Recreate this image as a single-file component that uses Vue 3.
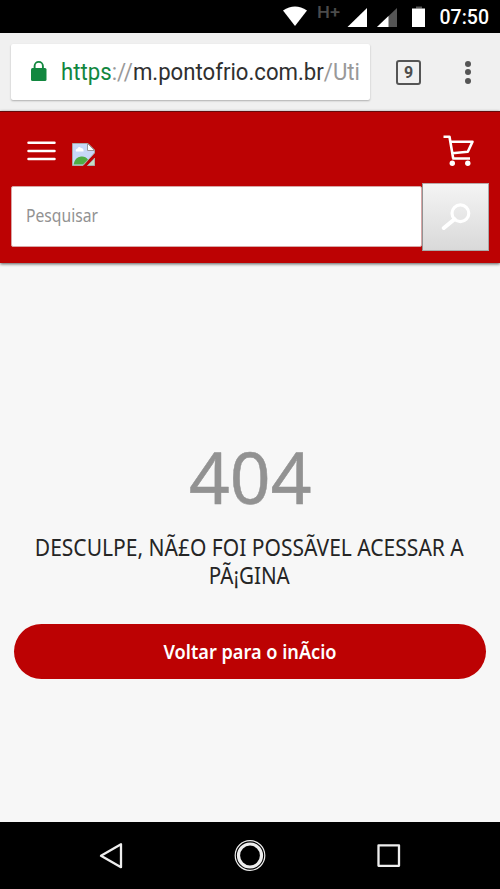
<script setup>
const titleLines = [
  { text: 'DESCULPE, NÃ£O FOI POSSÃVEL ACESSAR A', width: 428, y: 32 },
  { text: 'PÃ¡GINA', width: 80, y: 60 },
]
</script>

<template>
  <div class="screen">
    <div class="status">
      <svg width="230" height="33" viewBox="270 0 230 33">
        <path d="M283 10.500Q295 2.500 307 10.500L295 26Z" fill="#fff" />
        <text class="roboto" x="317" y="18" font-size="16" font-weight="500" fill="#4b4b4b" textLength="23" lengthAdjust="spacingAndGlyphs">H+</text>
        <path d="M347.500 27L367 8V27Z" fill="#fff" />
        <path d="M377 27L397 8V27Z" fill="#555" />
        <path d="M377 27L388.500 16V27Z" fill="#fff" />
        <path d="M416 6.500h6v2h-6z" fill="#555" />
        <path d="M412 8.500h13V27h-13z" fill="#fff" />
        <text class="roboto" x="439.500" y="24" font-size="20" font-weight="500" fill="#fff" textLength="49.500" lengthAdjust="spacingAndGlyphs">07:50</text>
      </svg>
    </div>

    <div class="browser">
      <div class="address">
        <svg width="359" height="56" viewBox="11 44 359 56">
          <rect x="31" y="68" width="15.500" height="13" rx="1.500" fill="#12873f" />
          <path d="M34.600 69V66a4.150 4.150 0 0 1 8.300 0V69" fill="none" stroke="#12873f" stroke-width="1.900" />
          <text class="roboto" x="61" y="80" font-size="23" fill="#303030" textLength="299" lengthAdjust="spacingAndGlyphs"><tspan fill="#12873f">https</tspan><tspan fill="#999">://</tspan>m.pontofrio.com.br<tspan fill="#999">/Uti</tspan></text>
        </svg>
      </div>
      <div class="tabs">9</div>
      <div class="dots"><i></i><i></i><i></i></div>
    </div>

    <header class="header">
      <div class="brand">
        <svg class="burger" width="29" height="20" viewBox="0 0 29 20">
          <path d="M1.500 1.800h26M1.500 9.900h26M1.500 18h26" stroke="#fff" stroke-width="2.500" stroke-linecap="round" />
        </svg>
        <svg class="broken" width="23" height="23" viewBox="0 0 23 23">
          <path d="M.5.500H16L22.500 7V10L11 22.500H.5Z" fill="#c7d8f8" stroke="#aaa" />
          <path d="M4 8.500q-1-2.500 1.500-3Q7 2.800 9 5q3 0 2.500 3.500Z" fill="#fff" />
          <path d="M1.500 21.500Q3 14 9 13.500Q13.500 13 16 16.500L11 21.500Z" fill="#4fad43" />
          <path d="M15.500.500V7.500H22.500Z" fill="#fff" stroke="#999" />
          <path d="M22.800 15V22.500H15.500Z" fill="#c3dfc6" stroke="#aaa" />
        </svg>
        <svg class="cart" width="31" height="32" viewBox="0 0 31 32">
          <path d="M.5 1.800H6.500L10.200 23.500M7.600 6.800H29.500L24.800 16.800L9.300 18.200M9.300 23.500H27" fill="none" stroke="#fff" stroke-width="2.600" stroke-linejoin="round" />
          <circle cx="9.300" cy="28.300" r="2.700" fill="#fff" />
          <circle cx="24.800" cy="28.300" r="2.700" fill="#fff" />
        </svg>
      </div>
      <div class="search">
        <div class="field">
          <svg width="90" height="34" viewBox="-5 -3 90 34">
            <text class="noto" x="-1" y="19.800" font-size="17.300" fill="#929292" textLength="72" lengthAdjust="spacingAndGlyphs">Pesquisar</text>
          </svg>
        </div>
        <div class="go">
          <svg width="30" height="28" viewBox="0 0 30 28">
            <circle cx="19.400" cy="10.200" r="8.400" fill="none" stroke="#fff" stroke-width="3.200" />
            <path d="M13.500 16.200L2.800 25" stroke="#fff" stroke-width="4" stroke-linecap="round" />
          </svg>
        </div>
      </div>
    </header>

    <main class="content">
      <svg class="code" width="160" height="104" viewBox="0 0 160 104">
        <text class="noto digits" x="19" y="80" font-size="72" fill="#929292" textLength="122.500" lengthAdjust="spacingAndGlyphs">404</text>
      </svg>
      <svg class="title" width="460" height="72" viewBox="0 0 460 72">
        <text v-for="line in titleLines" :key="line.text" class="noto" :x="229.500 - line.width / 2 - 0.7" :y="line.y" font-size="23.300" fill="#252525" :textLength="line.width + 1" lengthAdjust="spacingAndGlyphs">{{ line.text }}</text>
      </svg>
      <div class="button">
        <svg width="180" height="40" viewBox="0 0 180 40">
          <text class="noto" x="3.500" y="26.500" font-size="20" font-weight="600" fill="#fff" textLength="173" lengthAdjust="spacingAndGlyphs">Voltar para o inÃcio</text>
        </svg>
      </div>
    </main>

    <nav class="nav">
      <svg width="500" height="67" viewBox="0 822 500 67">
        <g fill="none" stroke="#eee" stroke-width="2.300" stroke-linejoin="round">
          <path d="M101 855.700L121 844.200V867.200Z" />
          <circle cx="250" cy="855.500" r="11.500" stroke-width="3.200" />
          <circle cx="250" cy="855.500" r="14.800" stroke-width="1.200" />
          <rect x="378.500" y="845.300" width="20.500" height="20.500" />
        </g>
      </svg>
    </nav>
  </div>
</template>

<style>
body { margin: 0; background: #f7f7f7; }
</style>

<style scoped>
.screen { width: 500px; height: 889px; display: flex; flex-direction: column; background: #f7f7f7; overflow: hidden; font-family: Roboto, sans-serif; }
svg { display: block; flex: none; }
.roboto { font-family: Roboto, sans-serif; }
.noto { font-family: "Noto Sans", sans-serif; }
.status { height: 33px; flex: none; background: #000; display: flex; justify-content: flex-end; }
.browser { height: 78px; flex: none; box-sizing: border-box; background: #f0f0f0; display: flex; align-items: center; padding: 0 30px 0 11px; }
.address { width: 359px; height: 56px; background: #fff; border-radius: 2px; box-shadow: 0 1px 2px rgba(0, 0, 0, .28); }
.tabs { box-sizing: border-box; width: 25px; height: 25px; margin-left: 26px; border: 2px solid #555; border-radius: 3px; color: #4d4d4d; font-size: 16px; line-height: 21px; font-weight: 700; text-align: center; }
.dots { display: flex; flex-direction: column; gap: 2.5px; margin-left: auto; margin-right: -1px; }
.dots i { width: 6px; height: 6px; border-radius: 50%; background: #555; }
.header { height: 152px; flex: none; box-sizing: border-box; background: #bc0203; border-top: 1px solid #650b0b; box-shadow: 0 1px 3px rgba(0, 0, 0, .65); display: flex; flex-direction: column; padding: 0 11px; }
.brand { height: 71px; display: flex; align-items: flex-start; padding: 0 15px 0 16px; }
.burger { margin-top: 29px; }
.broken { margin: 31px 0 0 16px; }
.cart { margin: 23px 0 0 auto; }
.search { display: flex; align-items: center; }
.field { box-sizing: border-box; width: 411px; height: 61px; margin-top: -2px; padding-left: 10px; display: flex; align-items: center; background: #fff; border: 1px solid #d8a6a6; border-radius: 2px; }
.go { box-sizing: border-box; width: 67px; height: 68px; border: 1.5px solid; border-color: #b9a9a9 #aaa #aaa #929292; background: linear-gradient(#f4f4f4, #d9d9d9); display: flex; align-items: center; justify-content: center; }
.content { flex: 1; display: flex; flex-direction: column; align-items: center; }
.code { margin-top: 161px; }
.digits { stroke: #929292; stroke-width: .5px; stroke-linejoin: round; }
.title { margin-top: -4px; }
.button { width: 472px; height: 55px; margin-top: 28px; border-radius: 28px; background: #bc0203; display: flex; align-items: center; justify-content: center; }
.nav { height: 67px; flex: none; background: #000; }
</style>
